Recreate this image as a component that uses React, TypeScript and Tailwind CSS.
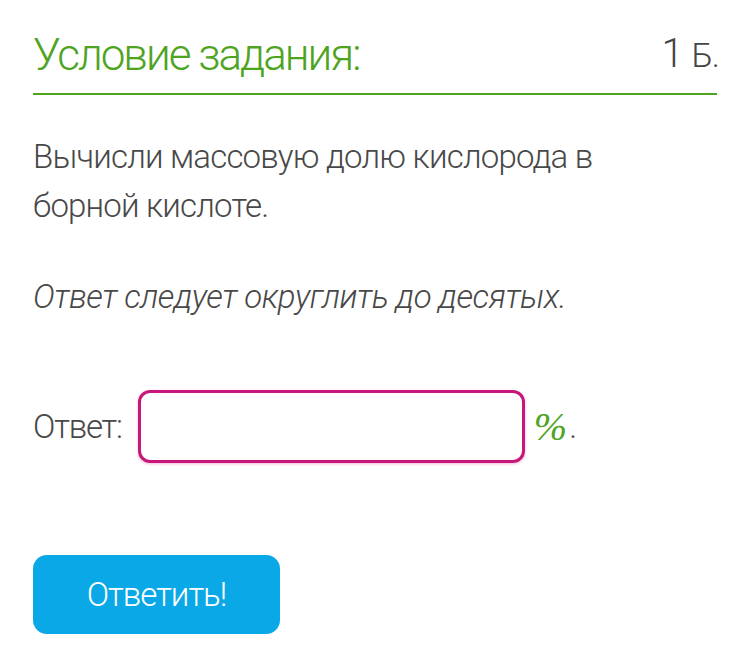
import React from 'react';

const font = { fontFamily: 'Roboto, "Liberation Sans", sans-serif' };

export default function App() {
  return (
    <div className="w-[750px] h-[647px] bg-white px-[33px] pt-[28px] font-light" style={font}>
      <div className="flex items-end justify-between border-b-2 border-[#4ea41f] pb-[12px]">
        <h1 className="text-[44px] leading-[52px] text-[#4ea41f] tracking-[-2px] font-light">Условие задания:</h1>
        <span className="text-[40px] leading-[52px] text-[#444] tracking-[-1px] -mr-[2px]">
          1 <span className="text-[34px]">Б.</span>
        </span>
      </div>

      <p className="mt-[37px] text-[33px] leading-[49px] text-[#484848] tracking-[-0.8px] w-[600px]">
        Вычисли массовую долю кислорода в борной кислоте.
      </p>

      <p className="mt-[42px] text-[33px] leading-[49px] text-[#484848] italic tracking-[-0.5px]">
        Ответ следует округлить до десятых.
      </p>

      <div className="mt-[69px] flex items-center">
        <span className="text-[33px] text-[#484848] tracking-[-1.2px]">Ответ:</span>
        <div className="ml-[16px] w-[387px] h-[73px] rounded-[12px] border-[3px] border-[#c8177a] shadow-[0_1px_3px_rgba(200,23,122,0.3)]" />
        <span
          className="ml-[9px] text-[40px] italic text-[#4ea41f]"
          style={{ fontFamily: '"Liberation Serif", serif' }}
        >
          %
        </span>
        <span className="ml-[2px] text-[33px] text-[#484848]">.</span>
      </div>

      <button className="mt-[92px] w-[247px] h-[79px] rounded-[14px] bg-[#0aa8e6] text-white text-[33px] font-light tracking-[-1px]">
        Ответить!
      </button>
    </div>
  );
}
